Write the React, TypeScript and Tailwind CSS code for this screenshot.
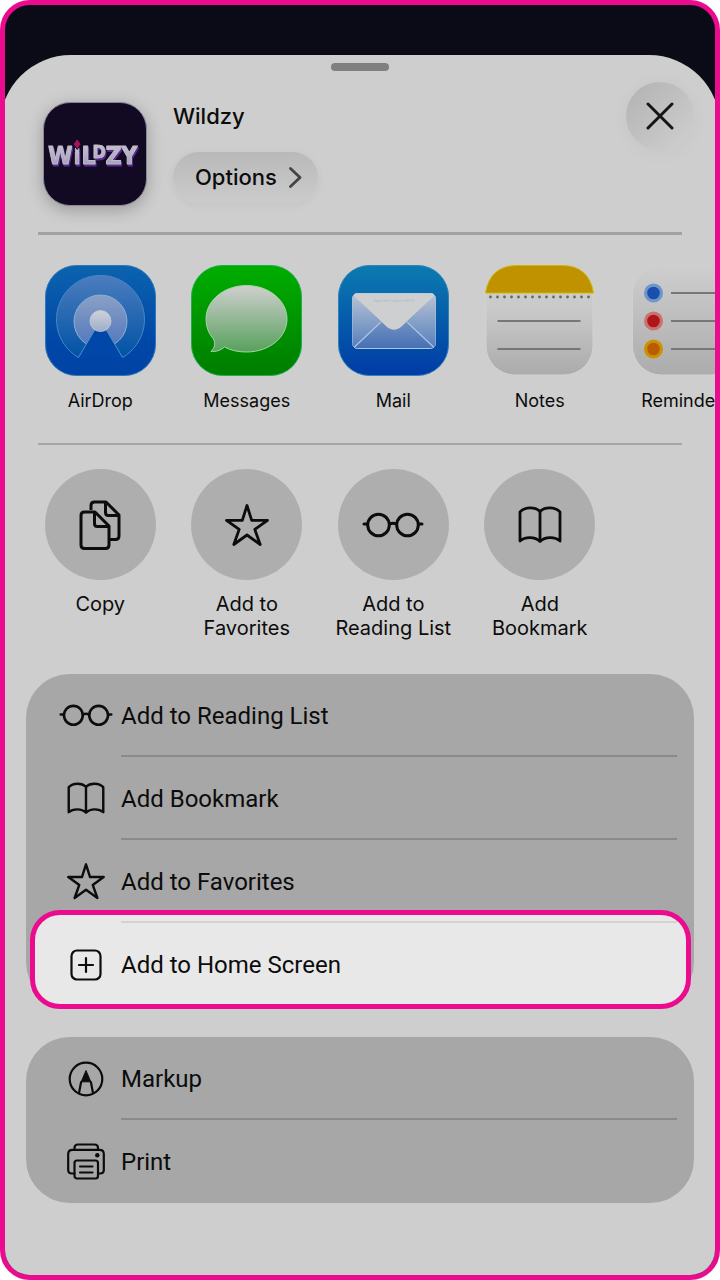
import type { ReactNode } from "react";

type IconProps = { className?: string };

function CopyIcon({ className }: IconProps) {
  return (
    <svg viewBox="0 0 42 50" fill="none" stroke="currentColor" strokeWidth="3" strokeLinejoin="round" className={className}>
      <path d="M12 10V5.500Q12 2 15.500 2H27L40 15V36Q40 39.500 36.500 39.500H31" />
      <path d="M26.500 2V12.500Q26.500 15.500 29.500 15.500H40" />
      <path d="M5.500 12H16L30 26V45Q30 48.500 26.500 48.500H5.500Q2 48.500 2 45V15.500Q2 12 5.500 12Z" />
      <path d="M15.500 12V23.500Q15.500 26.500 18.500 26.500H30" />
    </svg>
  );
}

function StarIcon({ className }: IconProps) {
  return (
    <svg viewBox="0 0 44 42" fill="none" stroke="currentColor" strokeWidth="2.800" strokeLinejoin="round" className={className}>
      <path d="M22 1.500L26.700 16.300H42.500L29.800 25.400L35.200 40.500L22 31L8.800 40.500L14.200 25.400L1.500 16.300H17.300Z" />
    </svg>
  );
}

function GlassesIcon({ className }: IconProps) {
  return (
    <svg viewBox="0 0 62 26" fill="none" stroke="currentColor" strokeWidth="3" strokeLinecap="round" className={className}>
      <circle cx="16.500" cy="13" r="10.800" />
      <circle cx="45.500" cy="13" r="10.800" />
      <path d="M27.500 12Q31 10.500 34.500 12M5.500 12H2M56.500 12H60" />
    </svg>
  );
}

function BookIcon({ className }: IconProps) {
  return (
    <svg viewBox="0 0 44 38" fill="none" stroke="currentColor" strokeWidth="2.800" strokeLinejoin="round" className={className}>
      <path d="M22 5.500C17 0.700 7 0.700 2 6V35C7 30.500 17 30.500 22 35.500C27 30.500 37 30.500 42 35V6C37 0.700 27 0.700 22 5.500Z" />
      <path d="M22 5.500V35" />
    </svg>
  );
}

function AddSquareIcon({ className }: IconProps) {
  return (
    <svg viewBox="0 0 32 32" fill="none" stroke="currentColor" strokeWidth="2.200" strokeLinecap="round" className={className}>
      <rect x="1.500" y="1.500" width="29" height="29" rx="5.500" />
      <path d="M16 9V23M9 16H23" />
    </svg>
  );
}

function MarkupIcon({ className }: IconProps) {
  return (
    <svg viewBox="0 0 36 36" fill="none" stroke="currentColor" strokeWidth="2.200" className={className}>
      <circle cx="18" cy="18" r="16.300" />
      <path d="M11 32L13.200 20.500M25 32L22.800 20.500" />
      <path d="M18 9.500L13.200 20.800H22.800Z" fill="currentColor" strokeWidth="1" strokeLinejoin="round" />
    </svg>
  );
}

function PrintIcon({ className }: IconProps) {
  return (
    <svg viewBox="0 0 38 37" fill="none" stroke="currentColor" strokeWidth="2.200" strokeLinecap="round" className={className}>
      <path d="M7.500 6.500V5Q7.500 1.500 11 1.500H27.500Q31 1.500 31 5V6.500" />
      <path d="M7.500 30.500H5Q1.200 30.500 1.200 27V11Q1.200 6.800 5.500 6.800H32.500Q36.800 6.800 36.800 11V27Q36.800 30.500 33 30.500H31" />
      <rect x="7.500" y="17.500" width="23.500" height="18" rx="2.500" />
      <path d="M13 23.500H25.500M13 29.500H25.500" />
      <circle cx="30.300" cy="12.200" r="2.200" fill="currentColor" stroke="none" />
    </svg>
  );
}

function AirDropIcon() {
  return (
    <svg viewBox="0 0 111 111" className="size-full" aria-hidden="true">
      <defs>
        <linearGradient id="ad-bg" x2="0" y2="1">
          <stop stopColor="#0b63ae" />
          <stop offset="0.700" stopColor="#0047a7" />
          <stop offset="1" stopColor="#0043a6" />
        </linearGradient>
        <linearGradient id="ad-outer" x2="0" y2="1">
          <stop stopColor="#4c7dbe" />
          <stop offset="1" stopColor="#0052a5" />
        </linearGradient>
        <linearGradient id="ad-inner" x2="0" y2="1">
          <stop stopColor="#8ba0c6" />
          <stop offset="1" stopColor="#5479bd" />
        </linearGradient>
        <linearGradient id="ad-dot" x2="0" y2="1">
          <stop stopColor="#d0d2d8" />
          <stop offset="1" stopColor="#9eadcb" />
        </linearGradient>
      </defs>
      <rect x="0.500" y="0.500" width="110" height="110" rx="31" fill="url(#ad-bg)" stroke="#2b78bb" />
      <path d="M33.500 92.500A44 44 0 1 1 77.500 92.500L55.500 56Z" fill="url(#ad-outer)" stroke="#4688c6" strokeLinejoin="round" />
      <path d="M41.500 79A26.500 26.500 0 1 1 69.500 79L55.500 56Z" fill="url(#ad-inner)" stroke="#8db0d6" strokeLinejoin="round" />
      <path d="M55.500 56L33.500 92.500H77.500Z" fill="#0047a7" />
      <path d="M49 66L33.500 92.500M62 66L77.500 92.500" stroke="#4688c6" />
      <circle cx="55.500" cy="56" r="10.500" fill="url(#ad-dot)" stroke="#c5cbd7" strokeWidth="0.800" />
    </svg>
  );
}

function MessagesIcon() {
  return (
    <svg viewBox="0 0 111 111" className="size-full" aria-hidden="true">
      <defs>
        <linearGradient id="ms-bg" x2="0" y2="1">
          <stop stopColor="#00ad00" />
          <stop offset="1" stopColor="#007d00" />
        </linearGradient>
        <linearGradient id="ms-bubble" x2="0" y2="1">
          <stop stopColor="#cfcfcf" />
          <stop offset="1" stopColor="#58a15c" />
        </linearGradient>
      </defs>
      <rect x="0.500" y="0.500" width="110" height="110" rx="31" fill="url(#ms-bg)" stroke="#1eb04c" />
      <path
        d="M55.500 20.500C78 20.500 96 35.500 96 54S78 87 55.500 87C47.500 87 40 85.500 33.500 82C29.500 85.500 24.500 87 20 86.500C24 82.500 24.500 79 22.500 74C17.500 68.500 15 61.500 15 54C15 35.500 33 20.500 55.500 20.500Z"
        fill="url(#ms-bubble)"
        stroke="#a4d5a9"
      />
    </svg>
  );
}

function MailIcon() {
  return (
    <svg viewBox="0 0 111 111" className="size-full" aria-hidden="true">
      <defs>
        <linearGradient id="ml-bg" x2="0" y2="1">
          <stop stopColor="#0b7bb0" />
          <stop offset="1" stopColor="#003ba5" />
        </linearGradient>
        <linearGradient id="ml-body" x2="0" y2="1">
          <stop stopColor="#a3b3cf" />
          <stop offset="1" stopColor="#4570b5" />
        </linearGradient>
        <linearGradient id="ml-side" x2="0" y2="1">
          <stop stopColor="#b7c2d4" />
          <stop offset="1" stopColor="#5780bd" />
        </linearGradient>
      </defs>
      <rect x="0.500" y="0.500" width="110" height="110" rx="31" fill="url(#ml-bg)" stroke="#2b84ba" />
      <rect x="14.500" y="28.500" width="83" height="55" rx="5" fill="url(#ml-body)" stroke="#aac6e0" />
      <path d="M16 30L43 57L16 82Q14.500 81 14.500 79V32Z" fill="url(#ml-side)" />
      <path d="M96 30L69 57L96 82Q97.500 81 97.500 79V32Z" fill="url(#ml-side)" />
      <path d="M16.500 82L43 57M95.500 82L69 57" stroke="#a9c7e2" strokeWidth="1.200" />
      <path d="M17 28.500H95Q97 30 95 32L64 61Q56 68.500 48 61L17 32Q15 30 17 28.500Z" fill="#cdcfd1" />
      <text x="56" y="37" textAnchor="middle" fontSize="3" fill="#a5b9cc" fontFamily="Inter, sans-serif">
        Apple Park, California 95014
      </text>
    </svg>
  );
}

function NotesIcon() {
  return (
    <svg viewBox="0 0 111 111" className="size-full" aria-hidden="true">
      <defs>
        <linearGradient id="nt-bg" x2="0" y2="1">
          <stop stopColor="#d0d0d0" />
          <stop offset="0.400" stopColor="#c9c9c9" />
          <stop offset="1" stopColor="#ababab" />
        </linearGradient>
      </defs>
      <rect x="2" y="1" width="107" height="109" rx="29" fill="url(#nt-bg)" stroke="#d2d2d2" />
      <path d="M1.500 28Q6 0.500 33 0.500H78Q105 0.500 109.500 28Z" fill="#c09200" stroke="#cdb800" />
      <path d="M6.500 32H106" stroke="#666" strokeWidth="2.800" strokeLinecap="round" strokeDasharray="0 7" />
      <path d="M13.500 56H96.500M13.500 84H96.500" stroke="#777" strokeWidth="2" />
    </svg>
  );
}

function RemindersIcon() {
  return (
    <svg viewBox="0 0 111 111" className="size-full" aria-hidden="true">
      <defs>
        <linearGradient id="rm-bg" x2="0" y2="1">
          <stop stopColor="#cecece" />
          <stop offset="1" stopColor="#acacac" />
        </linearGradient>
      </defs>
      <rect x="1.500" y="1" width="108" height="109" rx="29" fill="url(#rm-bg)" stroke="#d0d0d0" />
      <circle cx="22.500" cy="28" r="9.500" fill="#6e96c6" />
      <circle cx="22.500" cy="28" r="6.300" fill="#1b4fae" />
      <circle cx="22.500" cy="56" r="9.500" fill="#c97370" />
      <circle cx="22.500" cy="56" r="6.300" fill="#b0151c" />
      <circle cx="22.500" cy="84" r="9.500" fill="#c99200" />
      <circle cx="22.500" cy="84" r="6.300" fill="#b95c00" />
      <path d="M40 28H111M40 56H111M40 84H111" stroke="#777" strokeWidth="2" />
    </svg>
  );
}

function WildzyLogo() {
  return (
    <svg viewBox="0 0 103 103" className="size-full" role="img" aria-label="Wildzy logo">
      <defs>
        <linearGradient id="wz" x2="0" y2="1">
          <stop stopColor="#c9c7d2" />
          <stop offset="1" stopColor="#9c98b4" />
        </linearGradient>
      </defs>
      <text
        fontFamily="'Liberation Sans Narrow', 'DejaVu Sans Condensed', sans-serif"
        fontWeight="700"
        fontSize="28"
        fill="url(#wz)"
        stroke="#bdbac9"
        strokeWidth="1"
        strokeLinejoin="round"
        className="drop-shadow-[1px_2px_0_#5b2792]"
      >
        <tspan x="4" y="62" fontSize="25">W</tspan>
        <tspan x="30" y="62" fontSize="22">i</tspan>
        <tspan x="38" y="62" fontSize="25">L</tspan>
        <tspan x="49" y="56" fontSize="18">D</tspan>
        <tspan x="62" y="62" fontSize="25">Z</tspan>
        <tspan x="78" y="62" fontSize="25">Y</tspan>
      </text>
      <path d="M33.500 36L37.500 41.500L33.500 47L29.500 41.500Z" fill="#a3155a" stroke="#140a22" />
    </svg>
  );
}

const APPS: { label: string; icon: ReactNode }[] = [
  { label: "AirDrop", icon: <AirDropIcon /> },
  { label: "Messages", icon: <MessagesIcon /> },
  { label: "Mail", icon: <MailIcon /> },
  { label: "Notes", icon: <NotesIcon /> },
  { label: "Reminders", icon: <RemindersIcon /> },
];

const SHORTCUTS: { lines: string[]; icon: ReactNode }[] = [
  { lines: ["Copy"], icon: <CopyIcon className="h-[50px]" /> },
  { lines: ["Add to", "Favorites"], icon: <StarIcon className="h-[42px]" /> },
  { lines: ["Add to", "Reading List"], icon: <GlassesIcon className="h-[26px]" /> },
  { lines: ["Add", "Bookmark"], icon: <BookIcon className="h-[38px]" /> },
];

type Action = { label: string; icon: ReactNode; highlighted?: boolean };

const PAGE_ACTIONS: Action[] = [
  { label: "Add to Reading List", icon: <GlassesIcon className="w-[54px]" /> },
  { label: "Add Bookmark", icon: <BookIcon className="w-[38px]" /> },
  { label: "Add to Favorites", icon: <StarIcon className="w-[38px]" /> },
  {
    label: "Add to Home Screen",
    icon: <AddSquareIcon className="w-8" />,
    highlighted: true,
  },
];

const TOOL_ACTIONS: Action[] = [
  { label: "Markup", icon: <MarkupIcon className="w-9" /> },
  { label: "Print", icon: <PrintIcon className="w-[38px]" /> },
];

function ActionGroup({ actions }: { actions: Action[] }) {
  return (
    <ul className="mx-[21px] rounded-[44px] bg-[#a7a7a7]">
      {actions.map((action, i) => (
        <li key={action.label} className="relative">
          {action.highlighted ? (
            <span className="absolute -top-[13px] -bottom-[3px] left-1 right-[3px] rounded-[30px] border-5 border-[#eb0b8e] bg-[#e8e8e8]" />
          ) : null}
          <button type="button" className="relative flex h-[83px] w-full items-center pl-[33px] text-left">
            <span className="flex w-[54px] shrink-0 justify-center">{action.icon}</span>
            <span className="pl-2 font-['Roboto',sans-serif] text-2xl">{action.label}</span>
            {i > 0 ? (
              <span
                className={
                  action.highlighted
                    ? "absolute -top-[2px] right-[17px] left-[95px] h-[2px] bg-[#d2d2d2]"
                    : "absolute -top-[2px] right-[17px] left-[95px] h-[2px] bg-[#8a8a8a]"
                }
              />
            ) : null}
          </button>
        </li>
      ))}
    </ul>
  );
}

export default function App() {
  return (
    <div className="flex min-h-screen flex-col overflow-hidden rounded-[30px] border-5 border-[#eb0b8e] bg-[#0b0b17] pt-[50px] font-['Inter',sans-serif] text-[#0c0c0c]">
      <main className="-mx-[5px] flex-1 rounded-t-[71px] bg-[#cecece] px-[5px]">
        <div className="mx-auto flex h-[47px] w-[58px] items-start pt-2">
          <span className="h-2 w-full rounded-full bg-[#808080]" />
        </div>

        {/* Header */}
        <header className="flex gap-[26px] px-[38px]">
          <div className="size-[104px] overflow-hidden rounded-[27px] border border-[#8a8799] bg-[#120a22] shadow-[0_4px_16px_rgba(0,0,0,0.25)]">
            <WildzyLogo />
          </div>
          <div>
            <h1 className="text-[22px] leading-7 font-medium">Wildzy</h1>
            <button
              type="button"
              className="mt-[22px] flex h-[51px] items-center gap-3 rounded-full bg-linear-to-b from-[#b9b9b9] to-[#cbcbcb] pr-4 pl-[22px] text-[22px] font-medium shadow-[0_2px_10px_rgba(0,0,0,0.05)]"
            >
              Options
              <svg viewBox="0 0 13 21" fill="none" stroke="#444" strokeWidth="2.800" strokeLinecap="round" strokeLinejoin="round" className="h-[21px]">
                <path d="M1.500 1.500L11 10.500L1.500 19.500" />
              </svg>
            </button>
          </div>
          <button
            type="button"
            aria-label="Close"
            className="-mt-5 -mr-[17px] ml-auto flex size-[68px] items-center justify-center rounded-full bg-linear-to-br from-[#b2b2b2] to-[#d0d0d0] shadow-[0_2px_20px_rgba(0,0,0,0.04)]"
          >
            <svg viewBox="0 0 28 28" stroke="#151515" strokeWidth="3" strokeLinecap="round" className="size-7">
              <path d="M2 2L26 26M26 2L2 26" />
            </svg>
          </button>
        </header>

        {/* Apps */}
        <hr className="mx-[33px] mt-[26px] h-[3px] border-0 bg-[#a2a2a2]" />
        <ul className="mx-[22px] flex pt-[30px] pb-[30px]">
          {APPS.map((app) => (
            <li key={app.label} className="w-[22%] shrink-0">
              <button type="button" className="flex w-full flex-col items-center gap-[13px] text-lg leading-6">
                <span className="size-[111px]">{app.icon}</span>
                {app.label}
              </button>
            </li>
          ))}
        </ul>

        {/* Shortcuts */}
        <hr className="mx-[33px] h-[2px] border-0 bg-[#a6a6a6]" />
        <ul className="mx-[22px] flex pt-6 pb-[34px]">
          {SHORTCUTS.map((shortcut) => (
            <li key={shortcut.lines.join(" ")} className="w-[22%] shrink-0">
              <button type="button" className="flex w-full flex-col items-center gap-3 text-xl leading-6">
                <span className="flex size-[111px] items-center justify-center rounded-full bg-[#aeaeae]">
                  {shortcut.icon}
                </span>
                <span>
                  {shortcut.lines.map((line) => (
                    <span key={line} className="block">
                      {line}
                    </span>
                  ))}
                </span>
              </button>
            </li>
          ))}
        </ul>

        {/* Action lists */}
        <div className="flex flex-col gap-[31px] pb-[68px]">
          <ActionGroup actions={PAGE_ACTIONS} />
          <ActionGroup actions={TOOL_ACTIONS} />
        </div>
      </main>
    </div>
  );
}
